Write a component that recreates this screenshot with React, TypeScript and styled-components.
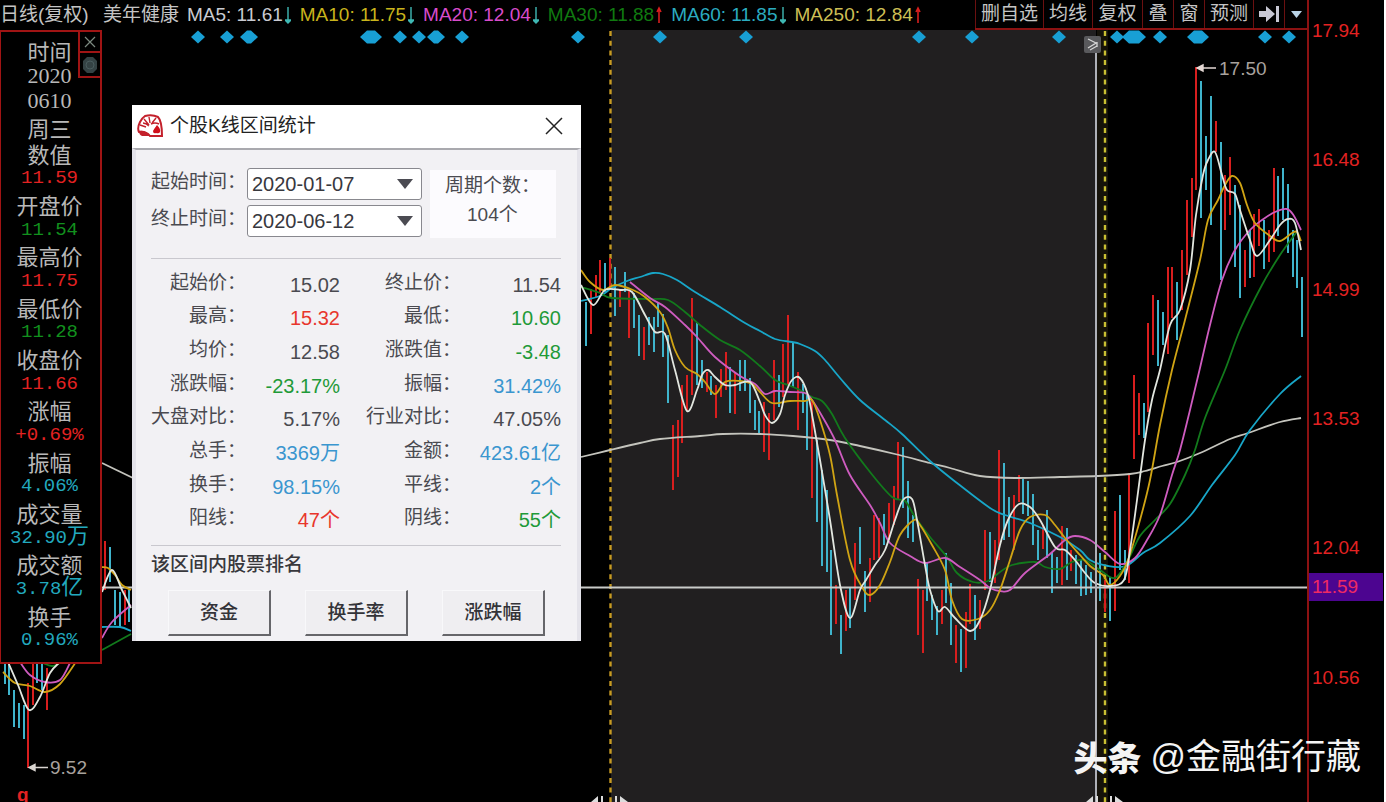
import React from "react";
import styled, { createGlobalStyle } from "styled-components";

const CYAN = "#3fb4cc";
const RED = "#d81e1e";
const CJK = '"Noto Sans CJK SC"';
const SANS = `"Liberation Sans", ${CJK}, sans-serif`;

const GlobalStyle = createGlobalStyle`
  * { box-sizing: border-box; }
  body { margin: 0; background: #000; font-family: ${SANS}; }
  button, select { font-family: inherit; }
`;

const Page = styled.div`
  position: relative;
  display: grid;
  grid-template-columns: minmax(0, 1fr) 77px;
  grid-template-rows: 30px minmax(660px, 1fr);
  min-height: 100vh;
  overflow: hidden;
  background: #000;
  border-right: 2px solid #fff;
`;

/* ---------- header ---------- */

const Header = styled.header`
  display: flex;
  justify-content: space-between;
  white-space: nowrap;
`;

const Indicators = styled.div`
  display: flex;
  align-items: center;
  font-size: 19px;
  line-height: 28px;
  color: #c4c4c4;
`;

const Period = styled.span`
  width: 103px;
`;

const StockName = styled.span`
  width: 84px;
`;

const Indicator = styled.span<{ $color: string }>`
  display: flex;
  align-items: center;
  gap: 2px;
  margin-right: 9px;
  color: ${(p) => p.$color};
`;

const Toolbar = styled.nav`
  display: flex;
  border-bottom: 2px solid #8c1212;
`;

const ToolButton = styled.button<{ $width: number }>`
  display: flex;
  align-items: center;
  justify-content: center;
  width: ${(p) => p.$width}px;
  padding: 0;
  border: 0;
  border-left: 1px solid #6b1010;
  background: none;
  color: #c4c4c4;
  font-size: 19px;
  line-height: 28px;
  white-space: nowrap;
`;

/* ---------- chart and axis ---------- */

const ChartArea = styled.main`
  position: relative;
  grid-row: 2;
`;

const ChartSvg = styled.svg`
  position: absolute;
  inset: 0;
  width: 100%;
  height: 100%;
`;

const Axis = styled.aside`
  position: relative;
  grid-column: 2;
  grid-row: 1 / 3;
  display: flex;
  flex-direction: column;
  padding: 16px 0 10px;
  border-left: 2px solid #8c1212;
`;

const Tick = styled.span`
  flex: 1;
  padding-left: 3px;
  color: #e32222;
  font-size: 19px;
  line-height: 30px;
`;

const CurrentPrice = styled.span`
  position: absolute;
  top: 573px;
  left: 0;
  right: 1px;
  padding-left: 3px;
  background: #4c0590;
  color: #ee2a63;
  font-size: 19px;
  line-height: 28px;
`;

/* ---------- floating data window ---------- */

const DataWindow = styled.section`
  position: absolute;
  top: 0;
  left: 0;
  width: 102px;
  padding: 5px 0 9px;
  border: 2px solid #a01414;
  border-left-width: 1px;
  background: #000;
`;

const DataList = styled.div`
  display: flex;
  flex-direction: column;
  height: 616px;
  padding-right: 2px;
`;

const DataLine = styled.div<{ $color?: string; $kind: "label" | "date" | "value" }>`
  flex: 1;
  min-height: 0;
  display: flex;
  align-items: center;
  justify-content: center;
  color: ${(p) => p.$color ?? "#b8b8b8"};
  font-family: ${(p) =>
    p.$kind === "value"
      ? `"Liberation Mono", ${CJK}, monospace`
      : p.$kind === "date"
      ? `"Liberation Serif", serif`
      : `${CJK}, sans-serif`};
  font-size: ${(p) => (p.$kind === "value" ? 19 : 22)}px;
  line-height: 24px;
`;

const Unit = styled.span`
  font-size: 22px;
`;

const WindowTools = styled.div`
  position: absolute;
  top: -2px;
  right: -2px;
  width: 24px;
  border: 2px solid #a01414;
`;

const WindowTool = styled.button`
  display: flex;
  align-items: center;
  justify-content: center;
  width: 20px;
  height: 19px;
  padding: 0;
  border: 0;
  background: #000;
  & + & {
    height: 25px;
    border-top: 2px solid #a01414;
  }
`;

/* ---------- statistics dialog ---------- */

const Dialog = styled.section`
  position: absolute;
  top: 75px;
  left: 132px;
  width: 449px;
  background: #f2f1f4;
  color: #4a4a50;
`;

const TitleBar = styled.header`
  display: flex;
  align-items: center;
  height: 43px;
  padding: 0 18px 2px 5px;
  background: #fff;
`;

const Title = styled.h1`
  flex: 1;
  margin: 0 0 0 6px;
  color: #222;
  font-size: 19px;
  font-weight: 400;
  line-height: 28px;
`;

const CloseButton = styled.button`
  display: flex;
  padding: 0;
  border: 0;
  background: none;
`;

const DialogBody = styled.div`
  padding: 18px 16px 5px 15px;
  border: 4px solid #e4e3ea;
  border-top: 2px solid #a9a9ae;
  border-bottom: 0;
`;

const RangeForm = styled.div`
  display: flex;
  gap: 8px;
  padding-bottom: 20px;
  border-bottom: 1px solid #c9c8ce;
`;

const Fields = styled.div`
  display: flex;
  flex-direction: column;
  gap: 5px;
`;

const Field = styled.div`
  display: flex;
  align-items: center;
`;

const FieldLabel = styled.label`
  width: 96px;
  padding-bottom: 4px;
  font-size: 19px;
  line-height: 28px;
  white-space: nowrap;
`;

const SelectBox = styled.span`
  position: relative;
  display: flex;
  width: 175px;
`;

const DateSelect = styled.select`
  appearance: none;
  width: 100%;
  height: 32px;
  padding: 0 4px;
  border: 1px solid #88888e;
  border-radius: 3px;
  background: #fff;
  color: #38383e;
  font-size: 20px;
`;

const SelectArrow = styled.svg`
  position: absolute;
  top: 11px;
  right: 9px;
  pointer-events: none;
`;

const PeriodCount = styled.div`
  width: 126px;
  height: 68px;
  margin-top: 2px;
  padding: 1px 0 0 15px;
  background: #fcfbfe;
  font-size: 19px;
  line-height: 29px;
  white-space: nowrap;
`;

const Count = styled.div`
  padding-left: 22px;
`;

const Stats = styled.table`
  width: 410px;
  height: 269px;
  margin: 9px 0 8px;
  border-collapse: collapse;
  table-layout: fixed;
`;

const StatLabel = styled.th<{ $width: number }>`
  width: ${(p) => p.$width}px;
  padding: 0 0 4px;
  font-size: 19px;
  font-weight: 400;
  line-height: 28px;
  text-align: right;
  white-space: nowrap;
`;

const StatValue = styled.td<{ $color: string; $width: number }>`
  width: ${(p) => p.$width}px;
  padding: 0;
  color: ${(p) => p.$color};
  font-size: 20px;
  line-height: 28px;
  text-align: right;
  white-space: nowrap;
`;

const Ranking = styled.h2`
  margin: 0;
  padding-top: 5px;
  border-top: 1px solid #c9c8ce;
  color: #38383c;
  font-size: 19px;
  font-weight: 500;
  line-height: 28px;
`;

const RankButtons = styled.div`
  display: flex;
  justify-content: space-between;
  margin: 11px 16px 0 17px;
`;

const RankButton = styled.button`
  width: 103px;
  height: 46px;
  padding: 0 0 4px;
  border: 1px solid #f8f8fa;
  border-right: 2px solid #66666a;
  border-bottom: 2px solid #66666a;
  background: #efeef1;
  color: #333338;
  font-size: 19px;
  font-weight: 500;
`;

/* ---------- watermark ---------- */

const Watermark = styled.div`
  position: absolute;
  right: 23px;
  bottom: 20px;
  display: flex;
  align-items: center;
  gap: 9px;
  color: #f4f4f4;
  font-size: 35px;
  line-height: 50px;
`;

const Brand = styled.strong`
  font-family: ${CJK}, sans-serif;
  font-size: 34px;
  font-weight: 900;
`;

/* ---------- data ---------- */

const indicators = [
  { text: "MA5: 11.61", color: "#c9cbd2", up: false },
  { text: "MA10: 11.75", color: "#c9b41c", up: false },
  { text: "MA20: 12.04", color: "#d84ccb", up: false },
  { text: "MA30: 11.88", color: "#107a10", up: true },
  { text: "MA60: 11.85", color: "#2bacc0", up: false },
  { text: "MA250: 12.84", color: "#cdbf55", up: true },
];

const tools = [
  { text: "删自选", width: 68 },
  { text: "均线", width: 49 },
  { text: "复权", width: 50 },
  { text: "叠", width: 31 },
  { text: "窗", width: 31 },
  { text: "预测", width: 49 },
];

const ticks = ["17.94", "16.48", "14.99", "13.53", "12.04", "10.56"];

const UP = "#e32222";
const DOWN = "#12901e";
const BLUE = "#22a9be";

const dataRows: { label: string; value: string; unit?: string; color: string }[] = [
  { label: "数值", value: "11.59", color: UP },
  { label: "开盘价", value: "11.54", color: DOWN },
  { label: "最高价", value: "11.75", color: UP },
  { label: "最低价", value: "11.28", color: DOWN },
  { label: "收盘价", value: "11.66", color: UP },
  { label: "涨幅", value: "+0.69%", color: UP },
  { label: "振幅", value: "4.06%", color: BLUE },
  { label: "成交量", value: "32.90", unit: "万", color: BLUE },
  { label: "成交额", value: "3.78", unit: "亿", color: BLUE },
  { label: "换手", value: "0.96%", color: BLUE },
];

const INK = "#4a4a50";
const S_RED = "#e8362c";
const S_GREEN = "#1f9a38";
const S_BLUE = "#3a96cf";

const stats: [string, string, string, string, string, string][] = [
  ["起始价", "15.02", INK, "终止价", "11.54", INK],
  ["最高", "15.32", S_RED, "最低", "10.60", S_GREEN],
  ["均价", "12.58", INK, "涨跌值", "-3.48", S_GREEN],
  ["涨跌幅", "-23.17%", S_GREEN, "振幅", "31.42%", S_BLUE],
  ["大盘对比", "5.17%", INK, "行业对比", "47.05%", INK],
  ["总手", "3369万", S_BLUE, "金额", "423.61亿", S_BLUE],
  ["换手", "98.15%", S_BLUE, "平线", "2个", S_BLUE],
  ["阳线", "47个", S_RED, "阴线", "55个", S_GREEN],
];

type Bar = [number, number, number];

const fallBars: Bar[] = [
  [5, 660, 684], [9, 660, 695], [14, 690, 727], [19, 703, 728], [24, 705, 739], [37, 660, 683], [42, 660, 690],
  [110, 547, 582], [115, 590, 625], [120, 592, 628], [129, 590, 622],
  [586, 302, 346], [605, 263, 292], [615, 267, 316], [625, 272, 292], [634, 293, 328], [639, 315, 356],
  [649, 317, 345], [654, 317, 352], [658, 303, 327], [663, 314, 357], [668, 335, 403], [697, 322, 385],
  [702, 360, 388], [711, 376, 395], [730, 367, 413], [740, 360, 391], [745, 360, 391], [750, 378, 413],
  [755, 400, 430], [759, 411, 433], [779, 375, 407], [793, 342, 387], [803, 384, 413], [807, 395, 450],
  [817, 440, 522], [822, 470, 566], [827, 490, 572], [831, 550, 635], [841, 615, 654], [850, 587, 628],
  [860, 527, 564], [865, 571, 612], [884, 514, 545], [903, 447, 508], [908, 481, 538], [913, 515, 542],
  [927, 562, 601], [932, 595, 620], [937, 606, 635], [946, 553, 603], [951, 583, 645], [961, 629, 672],
  [975, 595, 640], [990, 532, 582], [1004, 463, 540], [1009, 497, 537], [1023, 479, 514], [1028, 481, 516],
  [1033, 494, 545], [1038, 530, 560], [1047, 510, 558], [1052, 552, 593], [1057, 557, 583], [1067, 528, 580],
  [1076, 555, 584], [1081, 560, 596], [1086, 565, 595], [1091, 572, 593], [1100, 553, 601], [1110, 577, 621],
  [1120, 495, 570], [1125, 550, 580], [1144, 403, 438], [1158, 300, 366], [1163, 312, 345], [1177, 282, 340],
  [1201, 81, 218], [1206, 136, 190], [1211, 96, 225], [1221, 142, 280], [1235, 185, 267], [1240, 205, 298],
  [1250, 230, 278], [1264, 220, 269], [1278, 176, 236], [1283, 168, 220], [1288, 184, 253], [1293, 230, 277],
  [1297, 240, 288], [1302, 277, 337],
];

const riseBars: Bar[] = [
  [28, 683, 768], [33, 660, 705], [47, 668, 710], [105, 541, 590], [125, 590, 625],
  [591, 289, 334], [596, 275, 297], [600, 260, 293], [610, 258, 290], [620, 290, 307], [629, 290, 338],
  [644, 327, 360], [673, 425, 490], [678, 420, 477], [682, 385, 443], [687, 375, 411], [692, 298, 395],
  [707, 372, 392], [716, 385, 418], [721, 369, 397], [726, 352, 390], [735, 372, 414], [764, 402, 452],
  [769, 413, 460], [774, 360, 420], [783, 344, 397], [788, 315, 385], [798, 372, 430], [812, 400, 498],
  [836, 585, 624], [846, 590, 631], [855, 543, 600], [870, 558, 602], [874, 515, 560], [879, 518, 558],
  [889, 503, 540], [894, 486, 525], [898, 442, 500], [918, 579, 635], [923, 590, 653], [942, 590, 624],
  [956, 625, 663], [966, 612, 668], [970, 584, 624], [980, 600, 629], [985, 530, 590], [995, 540, 583],
  [999, 450, 560], [1014, 495, 550], [1019, 475, 502], [1043, 525, 549], [1062, 526, 585], [1071, 550, 571],
  [1105, 580, 612], [1115, 511, 611], [1129, 473, 583], [1134, 375, 459], [1139, 393, 435], [1148, 323, 412],
  [1153, 295, 355], [1168, 267, 354], [1172, 267, 318], [1182, 250, 310], [1187, 200, 275], [1192, 178, 237],
  [1196, 67, 190], [1216, 121, 152], [1225, 175, 230], [1230, 157, 215], [1245, 250, 287], [1254, 214, 277],
  [1259, 209, 246], [1269, 230, 262], [1274, 168, 252],
];

const averages: { color: string; points: string }[] = [
  { color: "#c4c4bd", points: "102,463 133,478" },
  {
    color: "#c4c4bd",
    points:
      "581,457 610,450 640,443 660,439 700,436 723,434 760,434 793,436 830,440 860,446 895,454 930,463 950,468 980,476 1015,478 1060,477 1098,476 1130,474 1145,471 1162,466 1177,462 1200,453 1230,439 1248,433 1280,422 1301,418",
  },
  {
    color: "#18a6c8",
    points:
      "581,301 600,296 612,288 627,281 640,277 653,273 663,274 677,280 695,292 720,307 745,323 760,331 775,339 792,342 800,344 815,351 825,360 840,378 860,400 885,420 902,434 930,461 957,483 990,508 1005,515 1030,523 1060,537 1080,550 1090,560 1108,566 1126,566 1143,553 1160,543 1190,516 1212,485 1235,455 1250,430 1280,394 1301,376",
  },
  { color: "#18a6c8", points: "102,627 120,627 131,631" },
  {
    color: "#127a1c",
    points:
      "581,287 600,293 612,298 650,299 668,300 685,312 700,325 720,340 740,350 760,366 775,380 788,385 800,390 812,397 822,401 832,414 845,438 870,472 892,497 905,501 915,517 930,537 947,557 957,573 973,582 988,581 1000,572 1012,565 1035,562 1045,567 1060,569 1072,562 1085,560 1100,570 1115,578 1128,560 1140,536 1155,520 1170,504 1185,475 1195,450 1205,418 1225,370 1240,330 1262,285 1280,255 1296,233",
  },
  { color: "#127a1c", points: "102,650 131,634" },
  { color: "#127a1c", points: "43,663 52,666 62,662" },
  {
    color: "#cf5cc0",
    points:
      "630,282 650,298 665,307 685,325 697,337 715,357 740,376 755,384 765,394 775,391 790,392 805,393 812,400 822,416 835,440 850,475 870,505 880,523 890,543 910,556 925,563 945,558 960,567 980,580 990,588 1000,591 1010,590 1025,573 1050,554 1065,540 1075,536 1090,540 1105,552 1120,564 1135,558 1147,540 1160,515 1172,475 1180,450 1190,410 1200,368 1210,325 1222,280 1235,250 1250,230 1262,220 1275,212 1287,209 1294,216 1301,230",
  },
  { color: "#cf5cc0", points: "102,638 112,622 131,605" },
  { color: "#cf5cc0", points: "20,662 30,675 45,682 60,680 70,663" },
  {
    color: "#d0a414",
    points:
      "581,270 590,282 603,290 615,285 633,290 645,297 660,312 668,328 675,350 685,367 697,374 705,382 715,394 725,382 740,381 752,384 760,392 772,403 790,401 805,401 812,400 820,420 830,455 837,495 850,560 862,587 870,595 880,585 890,562 900,535 914,520 920,525 932,545 945,570 952,600 962,619 978,619 990,610 1000,590 1010,560 1020,530 1030,517 1045,515 1055,525 1065,538 1080,555 1090,566 1103,575 1110,585 1120,576 1128,560 1140,520 1150,480 1160,425 1172,370 1185,320 1200,260 1208,220 1218,200 1225,185 1232,176 1240,183 1247,205 1255,223 1270,236 1280,241 1292,233 1297,232 1301,241",
  },
  { color: "#d0a414", points: "102,567 108,568 115,575 122,585 131,590" },
  { color: "#d0a414", points: "3,672 15,683 30,686 45,692 60,684 76,662" },
  {
    color: "#e2e6df",
    points:
      "581,285 593,305 605,290 620,290 632,292 645,315 655,332 665,334 675,370 687,411 697,390 702,375 708,370 715,377 725,385 735,385 750,382 760,402 765,415 772,423 780,414 785,395 792,380 800,378 808,395 813,420 820,460 830,520 840,585 850,618 860,590 866,580 875,565 885,550 895,520 903,500 912,499 917,520 925,565 930,590 938,611 945,607 955,618 970,631 980,620 990,590 1000,545 1008,520 1019,504 1030,507 1040,520 1055,547 1065,550 1075,560 1085,573 1095,583 1110,586 1124,580 1130,550 1137,500 1145,440 1152,400 1160,370 1170,325 1180,310 1190,270 1196,215 1203,175 1208,160 1215,152 1222,175 1227,190 1235,194 1240,210 1250,240 1257,256 1270,240 1280,225 1288,219 1295,223 1301,250",
  },
  { color: "#e2e6df", points: "102,592 112,570 122,590 131,608" },
  { color: "#e2e6df", points: "8,662 18,685 29,710 40,697 50,673 60,662" },
];

/* Event marks along the top: centre and half of the flat middle part. */
const marks: [number, number][] = [
  [198, 0], [227, 0], [249, 2], [371, 4], [400, 0], [419, 0], [436, 2], [462, 0], [578, 0], [660, 0], [746, 0],
  [919, 0], [972, 0], [1059, 0], [1117, 0], [1134, 5], [1160, 0], [1198, 4], [1265, 0], [1289, 0],
];

function smooth(points: string) {
  const p = points.split(" ").map((s) => s.split(",").map(Number));
  let d = `M${p[0][0]},${p[0][1]}`;
  for (let i = 0; i < p.length - 1; i++) {
    const a = p[Math.max(i - 1, 0)];
    const b = p[i];
    const c = p[i + 1];
    const e = p[Math.min(i + 2, p.length - 1)];
    d += `C${b[0] + (c[0] - a[0]) / 6},${b[1] + (c[1] - a[1]) / 6} ${c[0] - (e[0] - b[0]) / 6},${
      c[1] - (e[1] - b[1]) / 6
    } ${c[0]},${c[1]}`;
  }
  return d;
}

const bars = (list: Bar[]) => list.map(([x, a, b]) => `M${x},${a}V${b}`).join("");

/* ---------- drawings ---------- */

const TrendArrow = ({ up }: { up: boolean }) => (
  <svg width="6" height="18" viewBox="0 0 6 18" aria-hidden="true">
    {up ? (
      <path d="M3 17V2M1 6L3 2L5 6" stroke="#d81e1e" strokeWidth="1.6" fill="none" />
    ) : (
      <path d="M3 1V15M0 14H6L3 17Z" stroke="#3fb8b4" strokeWidth="1.4" fill="#3fb8b4" />
    )}
  </svg>
);

const Chart = () => (
  <ChartSvg viewBox="0 30 1307 772" preserveAspectRatio="none" role="img" aria-label="美年健康 日线">
    <rect x="611" y="30" width="485" height="772" fill="#211f20" />
    <rect x="1097" y="30" width="11" height="772" fill="#15120a" />
    <path d="M610.5 31V802" stroke="#c79a22" strokeWidth="2.4" strokeDasharray="5 4.7" />
    <path d="M1105 31V802" stroke="#c9bf32" strokeWidth="2.4" strokeDasharray="5 4.7" />
    <path d={bars(fallBars)} stroke={CYAN} strokeWidth="2" />
    <path d={bars(riseBars)} stroke={RED} strokeWidth="2" />
    <path d="M102 587.5H1307" stroke="#c9cbc9" strokeWidth="2" />
    {averages.map((line) => (
      <path key={line.points} d={smooth(line.points)} stroke={line.color} strokeWidth="1.8" fill="none" />
    ))}
    <path d="M1096 38V802" stroke="#aeb0b8" strokeWidth="2" />
    {marks.map(([x, half]) => (
      <path key={x} d={`M${x - half - 7} 37L${x - half} 30.5H${x + half}L${x + half + 7} 37L${x + half} 43.5H${x - half}Z`} fill="#189fd4" />
    ))}
    <rect x="1084" y="36" width="17" height="17" rx="2" fill="#59595c" />
    <path d="M1088 39L1096 43L1088 48M1097 42V47M1090 50L1097 46" stroke="#d8d8d8" strokeWidth="1.3" fill="none" />
    <path d="M1197 68H1216M1203 65L1197 68L1203 71Z" stroke="#e4d8d4" strokeWidth="1.4" fill="#e4d8d4" />
    <text x="1219" y="75" fill="#a8a29e" fontSize="19" fontFamily="Liberation Sans, sans-serif">17.50</text>
    <path d="M29 767.5H48M35 764.5L29 767.5L35 770.5Z" stroke="#d8d4d0" strokeWidth="1.4" fill="#d8d4d0" />
    <text x="50" y="774" fill="#a8a29e" fontSize="19" fontFamily="Liberation Sans, sans-serif">9.52</text>
    <text x="17" y="801" fill={UP} fontSize="19" fontWeight="700" fontFamily="Liberation Sans, sans-serif">q</text>
    {[610, 1105].map((x) => (
      <path key={x} d={`M${x - 19} 802L${x - 12} 796V802ZM${x - 9} 796H${x - 7}V802H${x - 9}ZM${x + 5} 796H${x + 7}V802H${x + 5}ZM${x + 10} 796L${x + 18} 802H${x + 10}Z`} fill="#dcdcdc" />
    ))}
  </ChartSvg>
);

const Logo = () => (
  <svg width="27" height="24" viewBox="0 0 27 24" aria-hidden="true">
    <path d="M8 2Q15 0 21 3Q25 7 25 22H13Q9 17 2 18Q0 14 3 8Q5 4 8 2Z" fill="#fff" stroke="#c3202b" strokeWidth="2" />
    <path d="M2 17Q9 16 13 22L5 22Q2 21 2 17Z" fill="#c3202b" />
    <path d="M7 5L12 11M12 3L13 9M19 4L15 9M3 11L9 13M12 12Q9 9 6 9M14 10Q18 8 22 10" stroke="#c3202b" strokeWidth="1.4" fill="none" />
    <path d="M20 11Q24 15 23 18Q22 20 19 19Q16 20 16 17Q17 15 20 11Z" fill="#d0101c" />
  </svg>
);

const Arrow = () => (
  <SelectArrow width="16" height="10" viewBox="0 0 16 10" aria-hidden="true">
    <path d="M0 0H16L8 10Z" fill="#4b4b52" />
  </SelectArrow>
);

const DateField = ({ id, label, value }: { id: string; label: string; value: string }) => (
  <Field>
    <FieldLabel htmlFor={id}>{label}</FieldLabel>
    <SelectBox>
      <DateSelect id={id} defaultValue={value}>
        <option>{value}</option>
      </DateSelect>
      <Arrow />
    </SelectBox>
  </Field>
);

const StatsDialog = () => (
  <Dialog role="dialog" aria-labelledby="stats-title">
    <TitleBar>
      <Logo />
      <Title id="stats-title">个股K线区间统计</Title>
      <CloseButton aria-label="关闭">
        <svg width="18" height="18" viewBox="0 0 18 18">
          <path d="M1 1L17 17M17 1L1 17" stroke="#222" strokeWidth="1.5" />
        </svg>
      </CloseButton>
    </TitleBar>
    <DialogBody>
      <RangeForm>
        <Fields>
          <DateField id="start" label="起始时间：" value="2020-01-07" />
          <DateField id="end" label="终止时间：" value="2020-06-12" />
        </Fields>
        <PeriodCount>
          周期个数：
          <Count>104个</Count>
        </PeriodCount>
      </RangeForm>
      <Stats>
        <tbody>
          {stats.map(([l1, v1, c1, l2, v2, c2]) => (
            <tr key={l1}>
              <StatLabel scope="row" $width={95}>{l1}：</StatLabel>
              <StatValue $color={c1} $width={94}>{v1}</StatValue>
              <StatLabel scope="row" $width={121}>{l2}：</StatLabel>
              <StatValue $color={c2} $width={100}>{v2}</StatValue>
            </tr>
          ))}
        </tbody>
      </Stats>
      <Ranking>该区间内股票排名</Ranking>
      <RankButtons>
        <RankButton>资金</RankButton>
        <RankButton>换手率</RankButton>
        <RankButton>涨跌幅</RankButton>
      </RankButtons>
    </DialogBody>
  </Dialog>
);

export default function App() {
  return (
    <>
      <GlobalStyle />
      <Page>
        <Header>
          <Indicators>
            <Period>日线(复权)</Period>
            <StockName>美年健康</StockName>
            {indicators.map((item) => (
              <Indicator key={item.text} $color={item.color}>
                {item.text}
                <TrendArrow up={item.up} />
              </Indicator>
            ))}
          </Indicators>
          <Toolbar>
            {tools.map((tool) => (
              <ToolButton key={tool.text} $width={tool.width}>{tool.text}</ToolButton>
            ))}
            <ToolButton $width={31} aria-label="移到最新">
              <svg width="20" height="20" viewBox="0 0 20 20">
                <path d="M0 7H7V2L16 10L7 18V13H0ZM17 2H20V18H17Z" fill="#c8c8d4" />
              </svg>
            </ToolButton>
            <ToolButton $width={23} aria-label="更多">
              <svg width="11" height="7" viewBox="0 0 11 7">
                <path d="M0 0H11L5.5 7Z" fill="#b9d3e6" />
              </svg>
            </ToolButton>
          </Toolbar>
        </Header>
        <ChartArea>
          <Chart />
          <DataWindow>
            <DataList>
              <DataLine $kind="label">时间</DataLine>
              <DataLine $kind="date">2020</DataLine>
              <DataLine $kind="date">0610</DataLine>
              <DataLine $kind="label">周三</DataLine>
              {dataRows.map((row) => (
                <React.Fragment key={row.label}>
                  <DataLine $kind="label">{row.label}</DataLine>
                  <DataLine $kind="value" $color={row.color}>
                    {row.value}
                    {row.unit && <Unit>{row.unit}</Unit>}
                  </DataLine>
                </React.Fragment>
              ))}
            </DataList>
            <WindowTools>
              <WindowTool aria-label="关闭">
                <svg width="12" height="12" viewBox="0 0 12 12">
                  <path d="M1 1L11 11M11 1L1 11" stroke="#7c8a80" strokeWidth="1.2" />
                </svg>
              </WindowTool>
              <WindowTool aria-label="设置">
                <svg width="16" height="18" viewBox="0 0 16 18">
                  <path d="M5 1H11L15 5V13L11 17H5L1 13V5Z" fill="#344244" />
                  <circle cx="8" cy="9" r="4" fill="none" stroke="#4a5c5e" />
                </svg>
              </WindowTool>
            </WindowTools>
          </DataWindow>
          <StatsDialog />
        </ChartArea>
        <Axis>
          {ticks.map((tick) => (
            <Tick key={tick}>{tick}</Tick>
          ))}
          <CurrentPrice>11.59</CurrentPrice>
        </Axis>
        <Watermark>
          <Brand>头条</Brand>
          <span>@金融街行藏</span>
        </Watermark>
      </Page>
    </>
  );
}
